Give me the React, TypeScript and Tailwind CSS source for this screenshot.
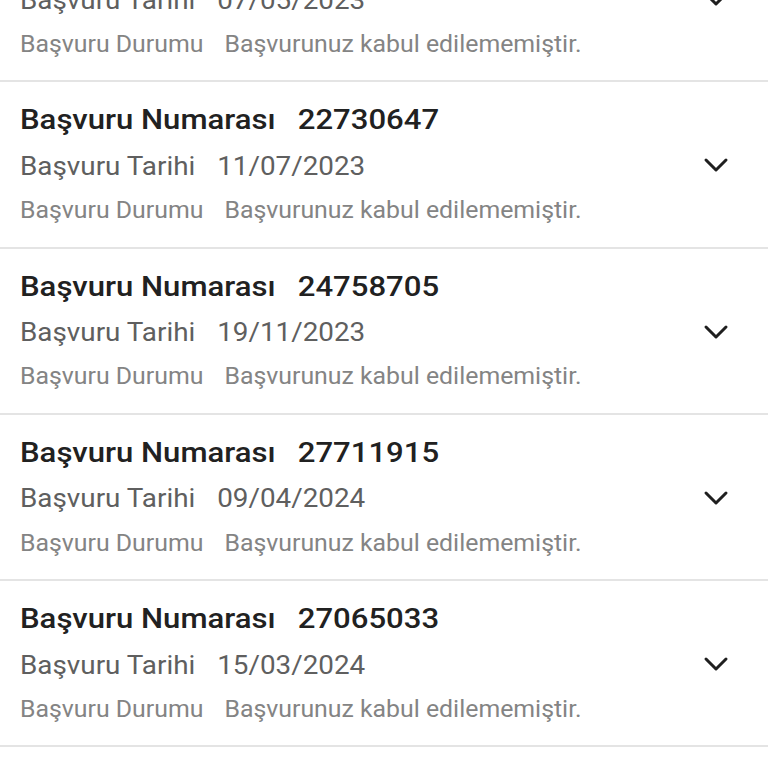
import React from "react";

const items = [
  { no: "21964410", date: "07/05/2023" },
  { no: "22730647", date: "11/07/2023" },
  { no: "24758705", date: "19/11/2023" },
  { no: "27711915", date: "09/04/2024" },
  { no: "27065033", date: "15/03/2024" },
];

function Chevron() {
  return (
    <svg width="26" height="16" viewBox="0 0 26 16" fill="none">
      <path d="M3 3 L13 13 L23 3" stroke="#1f1f1f" strokeWidth="3" strokeLinecap="round" strokeLinejoin="round" />
    </svg>
  );
}

function Item({ no, date }: { no: string; date: string }) {
  return (
    <div className="flex h-[166.25px] border-b-2 border-[#e4e4e4] bg-white">
      <div className="flex flex-1 flex-col pl-[20px] pt-[20px]">
        <div className="flex h-[36px] origin-left scale-x-[1.11] items-center text-[28px] font-medium text-[#212121]">
          <span>Başvuru Numarası</span>
          <span className="ml-[20px]">{no}</span>
        </div>
        <div className="mt-[10px] flex h-[36px] origin-left scale-x-[1.07] items-center text-[26px] text-[#5f5f5f]">
          <span>Başvuru Tarihi</span>
          <span className="ml-[20.5px]">{date}</span>
        </div>
        <div className="mt-[11px] flex h-[32px] origin-left scale-x-[1.08] items-center text-[23px] text-[#848484]">
          <span>Başvuru Durumu</span>
          <span className="ml-[19.5px]">Başvurunuz kabul edilememiştir.</span>
        </div>
      </div>
      <div className="flex w-[104px] items-start justify-center pt-[75px]">
        <Chevron />
      </div>
    </div>
  );
}

export default function App() {
  return (
    <div className="h-[768px] w-[768px] overflow-hidden bg-white" style={{ fontFamily: "Roboto, 'Noto Sans', sans-serif" }}>
      <div className="-mt-[84px]">
        {items.map((it) => (
          <Item key={it.no} {...it} />
        ))}
      </div>
    </div>
  );
}
